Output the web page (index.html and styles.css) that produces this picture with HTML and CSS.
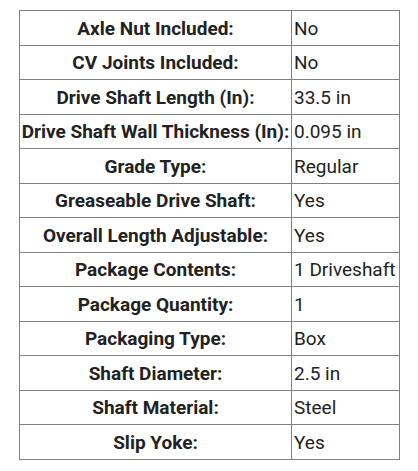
FILE: index.html
```html
<!DOCTYPE html>
<html><head><meta charset="utf-8"><link rel="stylesheet" href="styles.css"></head>
<body>
<table class="specs">
  <colgroup><col class="c-label"><col class="c-value"></colgroup>
  <tbody>
    <tr><th>Axle Nut Included:</th><td>No</td></tr>
    <tr><th>CV Joints Included:</th><td>No</td></tr>
    <tr><th>Drive Shaft Length (In):</th><td>33.5 in</td></tr>
    <tr><th>Drive Shaft Wall Thickness (In):</th><td>0.095 in</td></tr>
    <tr><th>Grade Type:</th><td>Regular</td></tr>
    <tr><th>Greaseable Drive Shaft:</th><td>Yes</td></tr>
    <tr><th>Overall Length Adjustable:</th><td>Yes</td></tr>
    <tr><th>Package Contents:</th><td>1 Driveshaft</td></tr>
    <tr><th>Package Quantity:</th><td>1</td></tr>
    <tr><th>Packaging Type:</th><td>Box</td></tr>
    <tr><th>Shaft Diameter:</th><td>2.5 in</td></tr>
    <tr><th>Shaft Material:</th><td>Steel</td></tr>
    <tr><th>Slip Yoke:</th><td>Yes</td></tr>
  </tbody>
</table>
</body></html>
```
FILE: styles.css
```css
body{margin:0;background:#fff;}
.specs{
  margin:10px 0 0 19px;
  border-collapse:collapse;
  table-layout:fixed;
  width:380px;
  font-family:"Roboto",sans-serif;
  font-size:19px;
  color:#222;
}
.c-label{width:272px}
.c-value{width:108px}
.specs th,.specs td{
  border:1px solid #808080;
  height:34.5px;
  padding:0;
  box-sizing:border-box;
  vertical-align:middle;
  white-space:nowrap;
  line-height:22px;
}
.specs th{
  font-weight:700;
  text-align:center;
  padding-top:2px;
}
.specs td{
  font-weight:400;
  text-align:left;
  padding-left:2px;
  padding-top:2px;
}
```
